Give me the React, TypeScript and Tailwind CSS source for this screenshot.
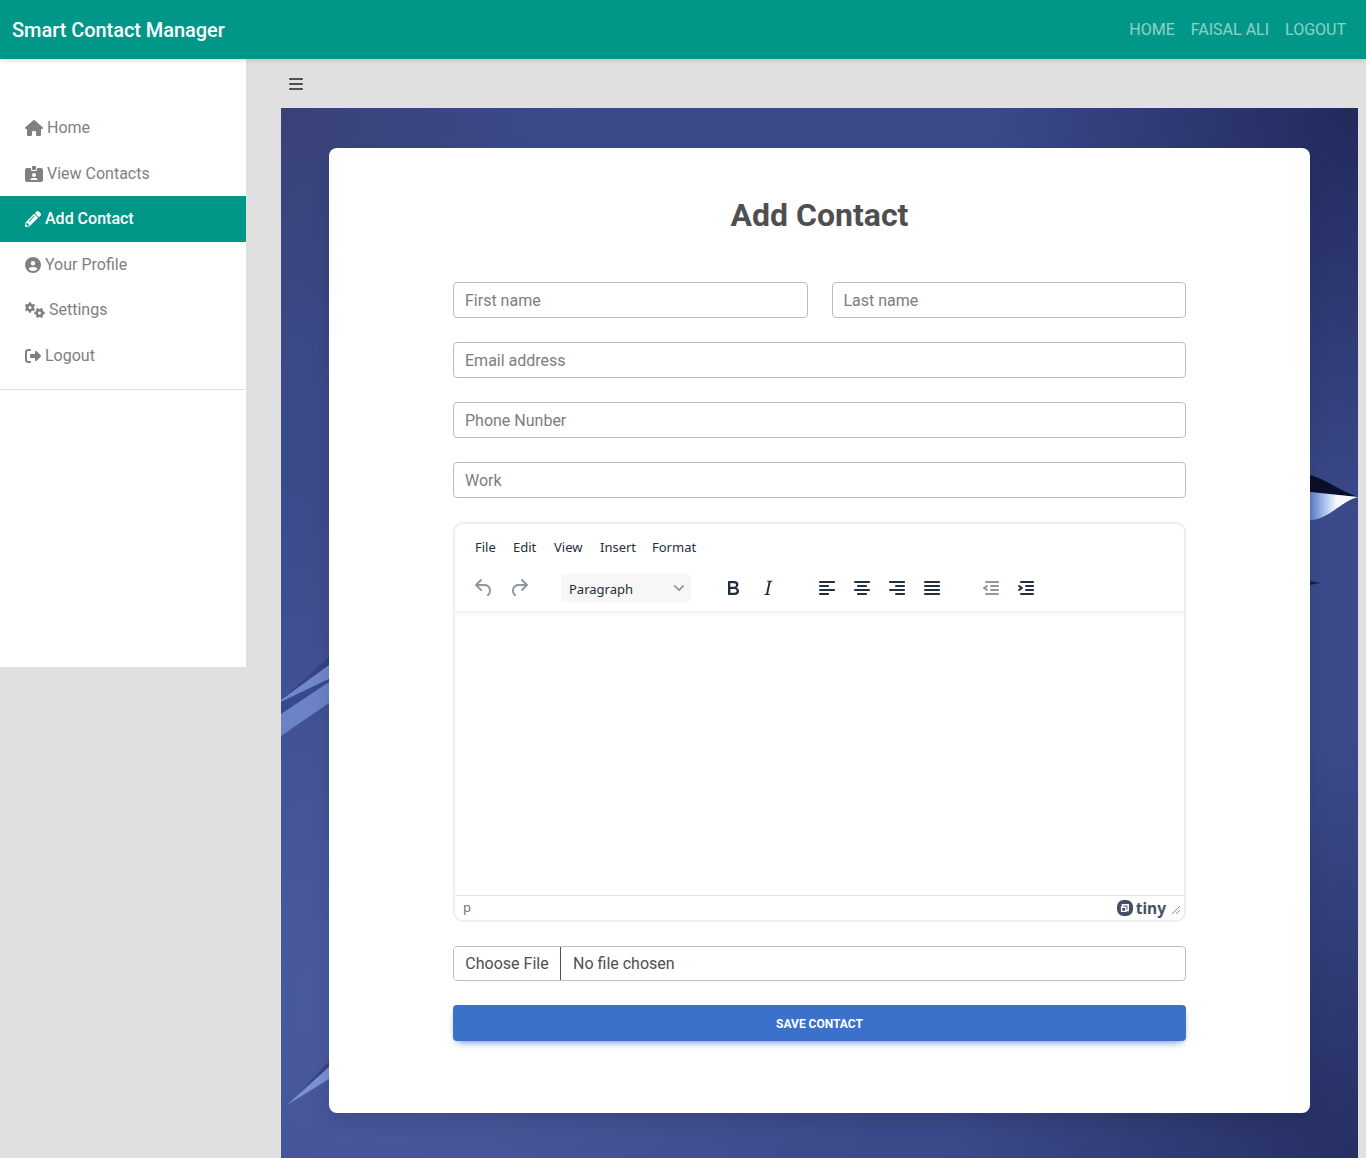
import { FaPencilAlt } from 'react-icons/fa';
import { FaBars, FaCircleUser, FaGears, FaHouse, FaIdCardClip, FaRightFromBracket } from 'react-icons/fa6';

const sideLinks = [
    { label: 'Home', icon: FaHouse, iconClass: 'h-4 w-[18px]' },
    { label: 'View Contacts', icon: FaIdCardClip, iconClass: 'h-4 w-[18px]' },
    { label: 'Add Contact', icon: FaPencilAlt, iconClass: 'h-4 w-4', active: true },
    { label: 'Your Profile', icon: FaCircleUser, iconClass: 'h-4 w-4' },
    { label: 'Settings', icon: FaGears, iconClass: 'h-4 w-5' },
    { label: 'Logout', icon: FaRightFromBracket, iconClass: 'h-4 w-4' },
];

const editorMenu = [
    { label: 'File', width: 'w-[38px]' },
    { label: 'Edit', width: 'w-[41px]' },
    { label: 'View', width: 'w-[46px]' },
    { label: 'Insert', width: 'w-[52px]' },
    { label: 'Format', width: 'w-[50px]' },
];

const inputClass =
    'h-9 w-full rounded border border-[#bdbdbd] bg-white px-[11px] text-base text-[#4f4f4f] placeholder:text-[#7d7d7d] outline-none';

const UNDO =
    'M6.4 8H12c3.7 0 6.2 2 6.8 5.1.6 2.7-.4 5.6-2.3 6.8a1 1 0 0 1-1-1.8c1.1-.6 1.8-2.7 1.4-4.6-.5-2.1-2.1-3.5-4.9-3.5H6.4l3.3 3.3a1 1 0 1 1-1.4 1.4l-5-5a1 1 0 0 1 0-1.4l5-5a1 1 0 0 1 1.4 1.4L6.4 8Z';
const REDO =
    'M17.6 10H12c-2.8 0-4.4 1.4-4.9 3.5-.4 2 .3 4 1.4 4.6a1 1 0 1 1-1 1.8c-2-1.2-2.9-4.1-2.3-6.8.6-3 3-5.1 6.8-5.1h5.6l-3.3-3.3a1 1 0 1 1 1.4-1.4l5 5a1 1 0 0 1 0 1.4l-5 5a1 1 0 0 1-1.4-1.4l3.3-3.3Z';
const BOLD =
    'M7.8 19c-.3 0-.5 0-.6-.2l-.2-.5V5.7c0-.2 0-.4.2-.5l.6-.2h5c1.5 0 2.7.3 3.5 1 .7.6 1.1 1.4 1.1 2.5a3 3 0 0 1-.6 1.9c-.4.6-1 1-1.6 1.2.4.1.9.3 1.3.6s.8.7 1 1.2c.4.4.5 1 .5 1.6 0 1.3-.4 2.3-1.3 3-.8.7-2.1 1-3.8 1H7.8Zm5-8.3c.6 0 1.2-.1 1.6-.5.4-.3.6-.7.6-1.3 0-1.1-.8-1.7-2.3-1.7H9.3v3.5h3.4Zm.5 6c.7 0 1.3-.1 1.7-.4.4-.4.6-.9.6-1.5s-.2-1-.7-1.4c-.4-.3-1-.4-2-.4H9.4v3.8h4Z';
const ITALIC =
    'm16.7 4.7-.1.9h-.3c-.6 0-1 0-1.4.3-.3.3-.4.6-.5 1.1l-2.1 9.8v.6c0 .5.4.8 1.4.8h.2l-.2.8H8l.2-.8h.2c1.1 0 1.8-.5 2-1.5l2-9.8.1-.5c0-.6-.4-.8-1.4-.8h-.3l.2-.9h5.8Z';
const ALIGN_LEFT =
    'M5 5h14c.6 0 1 .4 1 1s-.4 1-1 1H5a1 1 0 1 1 0-2Zm0 4h8c.6 0 1 .4 1 1s-.4 1-1 1H5a1 1 0 1 1 0-2Zm0 8h8c.6 0 1 .4 1 1s-.4 1-1 1H5a1 1 0 0 1 0-2Zm0-4h14c.6 0 1 .4 1 1s-.4 1-1 1H5a1 1 0 0 1 0-2Z';
const ALIGN_CENTER =
    'M5 5h14c.6 0 1 .4 1 1s-.4 1-1 1H5a1 1 0 1 1 0-2Zm3 4h8c.6 0 1 .4 1 1s-.4 1-1 1H8a1 1 0 1 1 0-2Zm0 8h8c.6 0 1 .4 1 1s-.4 1-1 1H8a1 1 0 0 1 0-2Zm-3-4h14c.6 0 1 .4 1 1s-.4 1-1 1H5a1 1 0 0 1 0-2Z';
const ALIGN_RIGHT =
    'M5 5h14c.6 0 1 .4 1 1s-.4 1-1 1H5a1 1 0 1 1 0-2Zm6 4h8c.6 0 1 .4 1 1s-.4 1-1 1h-8a1 1 0 0 1 0-2Zm0 8h8c.6 0 1 .4 1 1s-.4 1-1 1h-8a1 1 0 0 1 0-2Zm-6-4h14c.6 0 1 .4 1 1s-.4 1-1 1H5a1 1 0 0 1 0-2Z';
const JUSTIFY =
    'M5 5h14c.6 0 1 .4 1 1s-.4 1-1 1H5a1 1 0 1 1 0-2Zm0 4h14c.6 0 1 .4 1 1s-.4 1-1 1H5a1 1 0 1 1 0-2Zm0 4h14c.6 0 1 .4 1 1s-.4 1-1 1H5a1 1 0 0 1 0-2Zm0 4h14c.6 0 1 .4 1 1s-.4 1-1 1H5a1 1 0 0 1 0-2Z';
const OUTDENT =
    'M7 5h12c.6 0 1 .4 1 1s-.4 1-1 1H7a1 1 0 1 1 0-2Zm5 4h7c.6 0 1 .4 1 1s-.4 1-1 1h-7a1 1 0 0 1 0-2Zm0 4h7c.6 0 1 .4 1 1s-.4 1-1 1h-7a1 1 0 0 1 0-2Zm-5 4h12a1 1 0 0 1 0 2H7a1 1 0 0 1 0-2Zm1.6-3.8a1 1 0 0 1-1.2 1.6l-3-2a1 1 0 0 1 0-1.6l3-2a1 1 0 0 1 1.2 1.6L6.8 12l1.8 1.2Z';
const INDENT =
    'M7 5h12c.6 0 1 .4 1 1s-.4 1-1 1H7a1 1 0 1 1 0-2Zm5 4h7c.6 0 1 .4 1 1s-.4 1-1 1h-7a1 1 0 0 1 0-2Zm0 4h7c.6 0 1 .4 1 1s-.4 1-1 1h-7a1 1 0 0 1 0-2Zm-5 4h12a1 1 0 0 1 0 2H7a1 1 0 0 1 0-2Zm-2.6-3.8L6.2 12l-1.8-1.2a1 1 0 0 1 1.2-1.6l3 2a1 1 0 0 1 0 1.6l-3 2a1 1 0 1 1-1.2-1.6Z';

function ToolIcon({ d, muted = false }: { d: string; muted?: boolean }) {
    return (
        <svg viewBox="0 0 24 24" className={muted ? 'h-6 w-6 fill-[#222f3e]/50' : 'h-6 w-6 fill-[#222f3e]'}>
            <path d={d} />
        </svg>
    );
}

function Backdrop() {
    return (
        <svg viewBox="281 108 1077 1050" className="absolute inset-0 h-full w-full">
            <defs>
                <linearGradient id="shine" x1="0" y1="0" x2="1" y2="0">
                    <stop offset="0" stopColor="#5f7fcb" />
                    <stop offset="0.3" stopColor="#a9c2ec" />
                    <stop offset="0.55" stopColor="#f4f7fe" />
                    <stop offset="1" stopColor="#ffffff" />
                </linearGradient>
            </defs>
            <path d="M1310 475C1328 480 1340 491 1358 497L1310 492Z" fill="#0b0f2a" />
            <path d="M1310 492L1358 497C1340 502 1328 520 1310 520Z" fill="url(#shine)" />
            <path d="M1310 581L1321 583L1310 585Z" fill="#1c2450" />
            <path d="M329 657V665L281 700Z" fill="#364384" />
            <path d="M329 665V679L281 702V700Z" fill="#6f88ca" />
            <path d="M329 679V682L281 714V702Z" fill="#3a498f" />
            <path d="M329 682V703L281 736V714Z" fill="#6b83c6" />
            <path d="M329 1061V1067L300 1092Z" fill="#3a4684" />
            <path d="M329 1067V1079L287 1105Z" fill="#7b92d4" />
        </svg>
    );
}

function Editor() {
    return (
        <div className="flex h-[400px] flex-col overflow-hidden rounded-[10px] border-2 border-[#eeeeee] bg-white font-['Noto_Sans',sans-serif] text-[#222f3e]">
            <div className="shadow-[0_2px_4px_rgba(34,47,62,0.1)]">
                <div className="flex h-[38px] items-end pb-[5px] pl-5 text-[13px] leading-5">
                    {editorMenu.map(({ label, width }) => (
                        <span key={label} className={width}>
                            {label}
                        </span>
                    ))}
                </div>
                <div className="flex h-[49px] items-start pt-[14px] pl-[17px]">
                    <div className="flex gap-[11px]">
                        <ToolIcon d={UNDO} muted />
                        <ToolIcon d={REDO} muted />
                    </div>
                    <div className="-mt-0.5 ml-[30px] flex h-7 w-[130px] items-center justify-between rounded-[3px] bg-[#f7f7f7] pr-[7px] pl-2 text-[13px]">
                        <span className="translate-y-0.5">Paragraph</span>
                        <svg viewBox="0 0 10 10" className="h-[10px] w-[10px] fill-[#222f3e]/50">
                            <path d="M8.7 2.2c.3-.3.8-.3 1 0 .4.4.4.9 0 1.2L5.7 7.8c-.3.3-.9.3-1.2 0L.2 3.4a.8.8 0 0 1 0-1.2c.3-.3.8-.3 1.1 0L5 6l3.7-3.8Z" />
                        </svg>
                    </div>
                    <div className="ml-[30px] flex gap-[11px]">
                        <ToolIcon d={BOLD} />
                        <ToolIcon d={ITALIC} />
                    </div>
                    <div className="ml-[35px] flex gap-[11px]">
                        <ToolIcon d={ALIGN_LEFT} />
                        <ToolIcon d={ALIGN_CENTER} />
                        <ToolIcon d={ALIGN_RIGHT} />
                        <ToolIcon d={JUSTIFY} />
                    </div>
                    <div className="ml-[35px] flex gap-[11px]">
                        <ToolIcon d={OUTDENT} muted />
                        <ToolIcon d={INDENT} />
                    </div>
                </div>
            </div>
            <div className="flex-1" />
            <div className="flex h-[25px] items-center justify-between border-t border-[#e3e3e3] pr-[3px] pl-2 text-[13px] text-[#222f3e]/70">
                <span>p</span>
                <div className="flex items-center">
                    <svg viewBox="0 0 16 16" className="h-4 w-4">
                        <rect width="16" height="16" rx="6.5" fill="#455066" />
                        <path d="M5.5 7V4.8H11.2V10.5H9" fill="none" stroke="#ffffff" strokeWidth="1.6" />
                        <path d="M4.6 7.2H8.8V11.4H4.6Z" fill="none" stroke="#ffffff" strokeWidth="1.4" />
                    </svg>
                    <span className="ml-[3px] text-[15.5px] leading-5 font-bold text-[#455066]">tiny</span>
                    <svg viewBox="0 0 10 10" className="mt-1 ml-[5px] h-[10px] w-[10px] stroke-[#8a93a0]" strokeWidth="1">
                        <path d="M1 9L9 1M5 9L9 5" />
                    </svg>
                </div>
            </div>
        </div>
    );
}

export default function App() {
    return (
        <div className="min-h-[1158px] bg-[#e0e0e0] font-['Roboto',sans-serif]">
            <nav className="relative z-10 flex h-[59px] items-center justify-between bg-[#009688] pr-5 pl-3 shadow-[0_2px_4px_rgba(0,0,0,0.12)]">
                <span className="text-xl font-medium tracking-[-0.05px] text-white">Smart Contact Manager</span>
                <div className="flex gap-4 text-base text-white/55">
                    <span>HOME</span>
                    <span>FAISAL ALI</span>
                    <span>LOGOUT</span>
                </div>
            </nav>

            <div className="flex">
                <aside className="h-[608px] w-[246px] shrink-0 bg-white pt-[46.3px]">
                    <div className="border-b border-[#e0e0e0] pb-[10px]">
                        {sideLinks.map(({ label, icon: Icon, iconClass, active }) => (
                            <a
                                key={label}
                                className={
                                    active
                                        ? 'flex h-[45.6px] items-center gap-1 bg-[#009688] pl-[25px] text-base font-medium text-white'
                                        : 'flex h-[45.6px] items-center gap-1 pl-[25px] text-base text-[#808080]'
                                }
                            >
                                <Icon className={iconClass} />
                                {label}
                            </a>
                        ))}
                    </div>
                </aside>

                <main className="flex-1 pr-2 pl-[35px]">
                    <div className="flex h-[49px] items-center pl-2 text-[#4f4f4f]">
                        <FaBars className="h-4 w-[14px]" />
                    </div>
                    <section className="relative h-[1050px] bg-[radial-gradient(ellipse_380px_420px_at_100%_0%,#222a5c,transparent),radial-gradient(ellipse_420px_420px_at_100%_100%,#262f62,transparent),radial-gradient(ellipse_300px_300px_at_0%_0%,#394277,transparent),radial-gradient(ellipse_520px_520px_at_8%_85%,#4b5ba0,transparent),linear-gradient(#3b4a8b,#3b4a8b)] px-12 pt-10">
                        <Backdrop />
                        <div className="relative h-[965px] rounded-lg bg-white px-[124px] pt-[44px] shadow-[0_10px_20px_rgba(0,0,0,0.12)]">
                            <h1 className="mb-[44px] text-center text-[32px] leading-[46px] font-bold text-[#4f4f4f]">
                                Add Contact
                            </h1>
                            <form className="flex flex-col">
                                <div className="flex gap-6">
                                    <input className={inputClass} placeholder="First name" />
                                    <input className={inputClass} placeholder="Last name" />
                                </div>
                                <input className={`${inputClass} mt-6`} placeholder="Email address" />
                                <input className={`${inputClass} mt-6`} placeholder="Phone Nunber" />
                                <input className={`${inputClass} mt-6`} placeholder="Work" />
                                <div className="mt-6">
                                    <Editor />
                                </div>
                                <input
                                    type="file"
                                    className="mt-[24px] h-[35px] w-full overflow-hidden rounded border border-[#bdbdbd] bg-white text-base text-[#4f4f4f] file:mr-3 file:h-full file:w-[107px] file:border-0 file:border-r file:border-solid file:border-[#4f4f4f] file:bg-white file:text-base file:text-[#4f4f4f]"
                                />
                                <button
                                    type="button"
                                    className="mt-6 h-9 rounded bg-[#3b71ca] pt-px text-xs font-bold text-white shadow-[0_4px_9px_-4px_#3b71ca]"
                                >
                                    SAVE CONTACT
                                </button>
                            </form>
                        </div>
                    </section>
                </main>
            </div>
        </div>
    );
}
